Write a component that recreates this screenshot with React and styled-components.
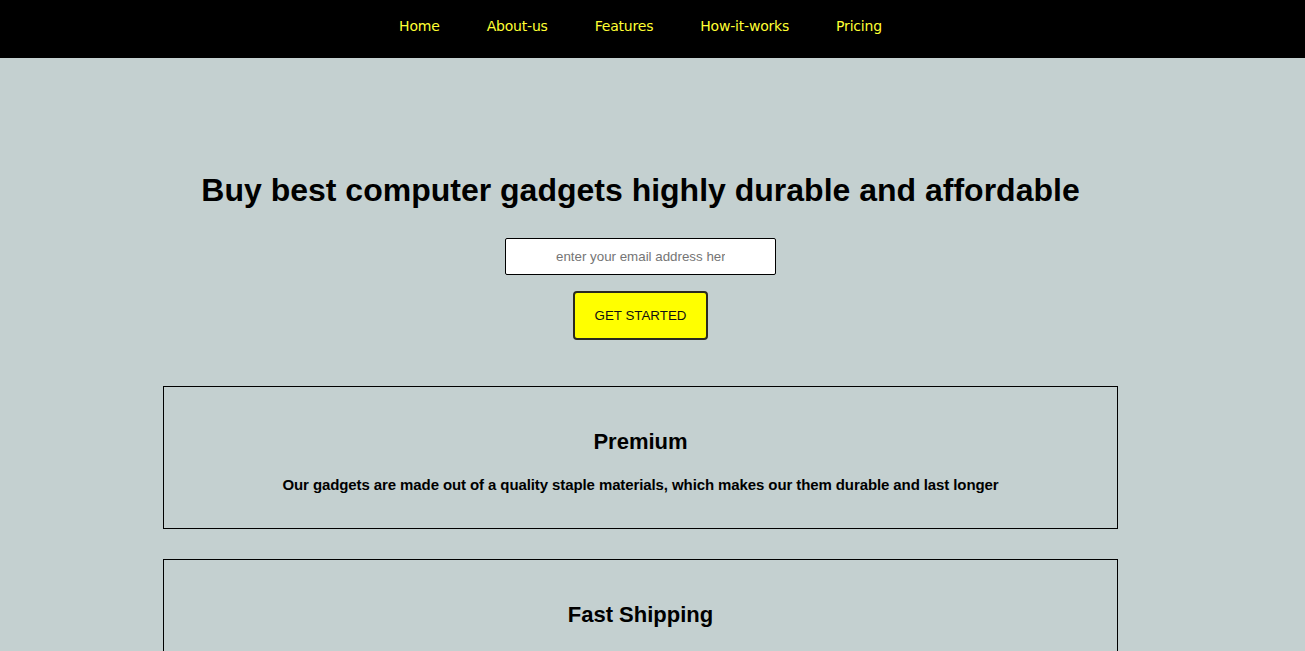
import React from "react";
import styled, { createGlobalStyle } from "styled-components";

const GlobalStyle = createGlobalStyle`
  html, body {
    margin: 0;
    padding: 0;
    background-color: #c4d0d0;
    overflow: hidden;
  }
`;

const NavBar = styled.nav`
  background-color: #000;
  height: 58px;
  width: 1281px;
  box-sizing: border-box;
  padding-bottom: 7px;
  display: flex;
  justify-content: center;
  align-items: center;
  gap: 47px;
  box-shadow: 24px 0 0 #000;
`;

const NavLink = styled.a`
  color: #ffff33;
  text-decoration: none;
  font-family: "DejaVu Sans", Verdana, sans-serif;
  font-size: 14px;
  letter-spacing: -0.2px;
`;

const Main = styled.main`
  width: 1281px;
  display: flex;
  flex-direction: column;
  align-items: center;
  padding-top: 112px;
`;

const Headline = styled.h1`
  margin: 0;
  font-family: "Liberation Sans", Arial, sans-serif;
  font-weight: 700;
  font-size: 32px;
  line-height: 40px;
  color: #000;
`;

const Form = styled.form`
  display: flex;
  flex-direction: column;
  align-items: center;
  gap: 16px;
  margin-top: 28px;
`;

const EmailInput = styled.input`
  box-sizing: border-box;
  width: 271px;
  height: 37px;
  padding: 0 50px;
  border: 1px solid #000;
  border-radius: 2px;
  background: #fff;
  text-align: center;
  font-family: "Liberation Sans", Arial, sans-serif;
  font-size: 13.33px;
  outline: none;
  &::placeholder {
    color: #757575;
  }
`;

const StartButton = styled.button`
  box-sizing: border-box;
  width: 135px;
  height: 49px;
  background: #ffff00;
  border: 2px solid #2a2a20;
  border-radius: 4px;
  font-family: "Liberation Sans", Arial, sans-serif;
  font-size: 13.33px;
  color: #111;
`;

const Cards = styled.section`
  display: flex;
  flex-direction: column;
  gap: 30px;
  margin-top: 46px;
`;

const Card = styled.div`
  box-sizing: border-box;
  width: 955px;
  height: 143px;
  border: 1px solid #000;
  display: flex;
  flex-direction: column;
  align-items: center;
  padding-top: 42px;
`;

const CardTitle = styled.h2`
  margin: 0;
  font-family: "Liberation Sans", Arial, sans-serif;
  font-weight: 700;
  font-size: 22px;
  line-height: 26px;
`;

const CardText = styled.p`
  margin: 21px 0 0;
  font-family: "Liberation Sans", Arial, sans-serif;
  font-weight: 700;
  font-size: 15px;
  letter-spacing: -0.1px;
  line-height: 18px;
`;

const features = [
  {
    title: "Premium",
    text: "Our gadgets are made out of a quality staple materials, which makes our them durable and last longer",
  },
  {
    title: "Fast Shipping",
    text: "We ship our products to every part of the world within a few days after your order",
  },
];

const links = ["Home", "About-us", "Features", "How-it-works", "Pricing"];

const App = () => {
  return (
    <>
      <GlobalStyle />
      <NavBar>
        {links.map((link) => (
          <NavLink key={link} href={`#${link.toLowerCase()}`}>
            {link}
          </NavLink>
        ))}
      </NavBar>
      <Main>
        <Headline>Buy best computer gadgets highly durable and affordable</Headline>
        <Form onSubmit={(e) => e.preventDefault()}>
          <EmailInput type="email" placeholder="enter your email address here" />
          <StartButton type="submit">GET STARTED</StartButton>
        </Form>
        <Cards>
          {features.map((item) => (
            <Card key={item.title}>
              <CardTitle>{item.title}</CardTitle>
              <CardText>{item.text}</CardText>
            </Card>
          ))}
        </Cards>
      </Main>
    </>
  );
};

export default App;
